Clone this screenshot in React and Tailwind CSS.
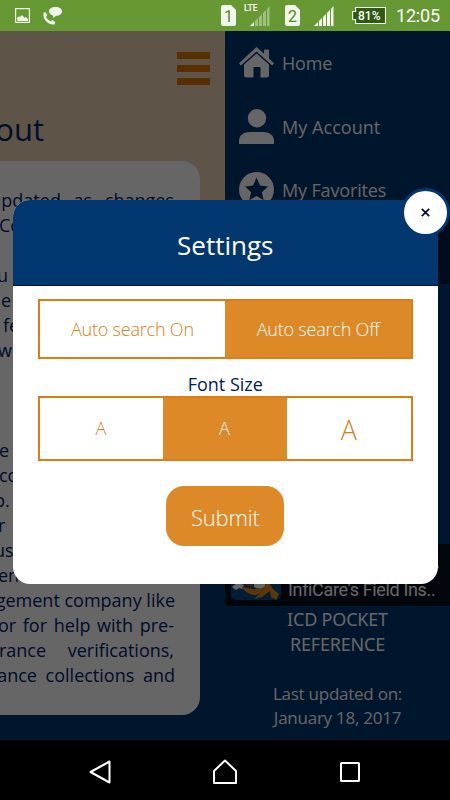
import React, { useState } from 'react';

// visible part of every article line, 25px each; lines are justified so the word gap varies
const articleLines = [
  { text: 'updated as changes', end: true, gap: 'pr-[26px] [word-spacing:8px]' },
  { text: 'Co', gap: '-ml-[1px]' },
  { text: '' },
  { text: 'u', gap: '-ml-[3px]' },
  { text: 'e', gap: 'pl-[1px]' },
  { text: 'fe', gap: 'pl-[3px]' },
  { text: 'wi', gap: '-ml-[2px]' },
  { text: '' },
  { text: '' },
  { text: '' },
  { text: 'e', gap: '-ml-[1px]' },
  { text: 'co', gap: '-ml-[1px]' },
  { text: 'p.', gap: '-ml-[6px]' },
  { text: 'r', gap: '-ml-[2px]' },
  { text: 'us', gap: '-ml-[6px]' },
  { text: 'en', gap: '-ml-[2px]' },
  { text: 'gement company like', end: true, gap: 'pr-[25px]' },
  { text: 'or for help with pre-', end: true, gap: 'pr-[26px] [word-spacing:2px]' },
  { text: 'urance verifications,', end: true, gap: 'pr-[26px] [word-spacing:17px]' },
  { text: 'ance collections and', end: true, gap: 'pr-[25px] [word-spacing:4px]' },
];

const SimCard = ({ n }) => (
  <div className="relative w-[15px] h-[21px]">
    <svg className="absolute inset-0" width="15" height="21" viewBox="0 0 15 21">
      <path d="M2 0h8l5 5v14a2 2 0 0 1-2 2H2a2 2 0 0 1-2-2V2a2 2 0 0 1 2-2z" fill="#f1f6ec" />
    </svg>
    <span className="relative block text-center text-[16px] leading-[23px] text-[#4f8a1c]">{n}</span>
  </div>
);

const Signal = ({ weak }) => (
  <svg width="20" height="20" viewBox="0 0 20 20" fill="#f4f8f0">
    <path d="M0 20L4 16V20z" />
    <path d="M5 15L8 12V20H5z" opacity={weak ? 0.4 : 1} />
    <path d="M9 11L12 8V20H9z" opacity={weak ? 0.4 : 1} />
    <path d="M13 7L16 4V20H13z" opacity={weak ? 0.4 : 1} />
    <path d="M17 3L19.5 0V20H17z" opacity={weak ? 0.4 : 1} />
  </svg>
);

const StatusBar = () => (
  <header className="h-[31px] bg-[#669933] flex items-start text-white font-[Roboto,sans-serif]">
    <svg className="ml-[15px] mt-2" width="15" height="15" viewBox="0 0 15 15">
      <rect x=".6" y=".6" width="13.8" height="13.8" fill="none" stroke="#f1f6ec" strokeWidth="1.2" />
      <path d="M2.3 13V9.5L4 8.3 5 9l2-2 2.5 2.7L11 9l2 2v2z" fill="#f1f6ec" />
    </svg>
    <svg className="ml-[12px] mt-[6px]" width="21" height="20" viewBox="0 0 21 20" fill="#f1f6ec">
      <path d="M13.5 1C17.5 1 20 2.6 20 5.4 20 8 17.5 9.6 14 9.8L11.6 12 11 9.4C8.6 8.8 7 7.5 7 5.5 7 2.7 9.6 1 13.5 1z" />
      <path d="M1.6 6.5L3.7 6.2 5.2 9.3 4 11c1 1.8 2.500 3.200 4.500 4.200L10.400 14l2.800 2-.5 2.400C8 19.600 0 14.500 1.600 6.500z" />
    </svg>
    <div className="ml-[158px] mt-[5px]"><SimCard n="1" /></div>
    <div className="relative ml-[14px] mt-[6px]">
      <span className="absolute -left-[6px] -top-[3px] text-[8.5px] leading-[10px] font-medium">LTE</span>
      <Signal weak />
    </div>
    <div className="ml-[15px] mt-[5px]"><SimCard n="2" /></div>
    <div className="ml-[14px] mt-[6px]"><Signal /></div>
    <div className="relative ml-[18px] mt-[7px] w-[34px] h-[17px]">
      <svg className="absolute inset-0" width="34" height="17" viewBox="0 0 34 17">
        <path d="M3.6 .5H33.5V16.5H3.6V12.5H.6V4.5H3.6z" fill="#2f5a14" stroke="#f4f8f0" strokeWidth="1.1" />
      </svg>
      <span className="relative block pl-[6px] text-[12px] leading-[18px] font-medium">81%</span>
    </div>
    <span className="ml-[10px] text-[18px] leading-[32px] tracking-[-0.2px]">12:05</span>
  </header>
);

const Article = () => (
  <section className="relative w-[225px] h-[709px] shrink-0 overflow-hidden bg-[#00376e]">
    <div className="h-[480px] bg-[#ebd2b4]">
      <div className="h-[130px] flex flex-col">
        <div className="mt-[21px] ml-[177px] w-[33px] flex flex-col gap-[6px]">
          <div className="h-[7px] bg-[#dd7700]"></div>
          <div className="h-[7px] bg-[#dd7700]"></div>
          <div className="h-[7px] bg-[#dd7700]"></div>
        </div>
        <h1 className="mt-[20px] w-[44px] flex justify-end text-[31px] leading-[48px] text-[#00286e]">out</h1>
      </div>
      <div className="w-[200px] h-[554px] pt-[27px] bg-white rounded-r-[18px] overflow-hidden text-[18px] leading-[25px] text-[#00226a]">
        {articleLines.map((line, i) => (
          <div key={i} className={`h-[25px] flex whitespace-nowrap ${line.end ? 'justify-end' : 'justify-start'}`}>
            <span className={line.gap}>{line.text}</span>
          </div>
        ))}
      </div>
    </div>
  </section>
);

const HomeIcon = () => (
  <svg width="35" height="32" viewBox="0 0 35 32" fill="#fff">
    <path d="M17.5 0L25 6.8V3.5q0-1 1-1h3q1 0 1 1v8L35 16.2 33.2 18.5 17.5 4.5 1.8 18.5 0 16.2z" />
    <path d="M17.5 6.5L30 17.5V28q0 2.5-2.5 2.5H21.5V21q0-1-1-1h-5q-1 0-1 1v9.5H7.5Q5 30.5 5 28V17.5z" />
  </svg>
);

const UserIcon = () => (
  <svg width="35" height="35" viewBox="0 0 35 35" fill="#fff">
    <circle cx="18" cy="9.2" r="9.2" />
    <path d="M0 35V32C0 26 5 23 11 23H24C30 23 35 26 35 32V35z" />
  </svg>
);

const StarIcon = () => (
  <svg width="35" height="35" viewBox="0 0 35 35">
    <circle cx="17.5" cy="17.5" r="17.5" fill="#fff" />
    <path d="M17.5 5.5L21 13.6 29 14.4 22.9 20.2 24.7 28.3 17.5 24 10.3 28.3 12.1 20.2 6 14.4 14 13.6z" fill="#00376e" />
  </svg>
);

const menu = [
  { label: 'Home', Icon: HomeIcon, spacing: 'tracking-[-0.2px]' },
  { label: 'My Account', Icon: UserIcon, spacing: 'tracking-[0.05px]' },
  { label: 'My Favorites', Icon: StarIcon, spacing: 'tracking-[-0.15px]' },
];

const Sidebar = () => (
  <aside className="w-[225px] h-[709px] bg-[#00376e] text-white">
    <nav className="h-[182px]">
      {menu.map(({ label, Icon, spacing }) => (
        <div key={label} className="h-[63.5px] pl-[14px] flex items-center gap-[8px] text-[18px]">
          <Icon />
          <span className={`pt-[2px] ${spacing}`}>{label}</span>
        </div>
      ))}
    </nav>
    <div className="h-[71px] bg-[#001f40]"></div>
    <div className="h-[260px]"></div>
    <div className="h-[62px] bg-[#000f20] flex gap-[7px] pl-[6px] pt-[6px] font-[Roboto,sans-serif] text-[18px] leading-[24px]">
      <svg width="50" height="50" viewBox="0 0 50 50">
        <rect width="50" height="50" rx="5" fill="#0b4a88" />
        <path d="M1 37q5-6 12-2l-2 4-3-1-3 2z" fill="#fff" />
        <path d="M10 36Q20 41 32 38Q29 46 22 45Q14 43 10 36z" fill="#e8891a" />
        <path d="M23 30h11v7q-6 3-11 0z" fill="#fff" />
        <path d="M14 34q4 3 8 2v-4h-8z" fill="#d63218" />
        <path d="M36 30l6 9 6 5-3 6-5-3-1-6-8 6-8 2q10-8 13-19z" fill="#e8891a" />
      </svg>
      <div className="whitespace-nowrap">
        <div className="w-[152px] flex justify-end">..</div>
        <div className="tracking-[-0.35px] mt-[4px]">InfiCare's Field Ins..</div>
      </div>
    </div>
    <div className="pt-[1px] text-center text-[18px] leading-[25px] tracking-[-0.2px] font-['Noto_Sans',sans-serif]">
      <p>ICD POCKET</p>
      <p>REFERENCE</p>
    </div>
    <div className="mt-[25px] text-center text-[17px] leading-[23.5px] tracking-[-0.25px]">
      <p>Last updated on:</p>
      <p>January 18, 2017</p>
    </div>
  </aside>
);

const sizes = [
  { id: 'small', className: 'w-[123px] text-[18px]' },
  { id: 'medium', className: 'w-[124px] text-[18px]' },
  { id: 'large', className: 'flex-1 text-[27px] pt-[3px]' },
];

const SettingsModal = () => {
  const [autoSearch, setAutoSearch] = useState(false);
  const [fontSize, setFontSize] = useState('medium');

  return (
    <div className="absolute left-[12.5px] top-[169px] w-[425.5px] h-[384px]">
      <div className="w-full h-full bg-white rounded-[17px] overflow-hidden flex flex-col">
        <div className="h-[86px] shrink-0 bg-[#033770] border-b border-[#00105c] flex items-center justify-center">
          <h2 className="text-white text-[26px] leading-none pt-[4px]">Settings</h2>
        </div>
        <div className="px-[25px] pt-[13px] flex flex-col items-center font-light">
          <div className="w-full h-[60px] flex border-2 border-[#dd7e14] text-[18px] tracking-[-0.2px]">
            <button
              onClick={() => setAutoSearch(true)}
              className={`flex-1 ${autoSearch ? 'bg-[#dd8928] text-white' : 'bg-white text-[#dd7e14]'}`}
            >
              Auto search On
            </button>
            <button
              onClick={() => setAutoSearch(false)}
              className={`flex-1 ${autoSearch ? 'bg-white text-[#dd7e14]' : 'bg-[#dd8928] text-white'}`}
            >
              Auto search Off
            </button>
          </div>
          <p className="mt-[13px] h-[24px] leading-[25px] text-[18px] text-[#00185e] font-normal">Font Size</p>
          <div className="w-full h-[65px] flex border-2 border-[#dd7e14]">
            {sizes.map((s) => (
              <button
                key={s.id}
                onClick={() => setFontSize(s.id)}
                className={`${s.className} ${fontSize === s.id ? 'bg-[#dd8928] text-white' : 'bg-white text-[#dd7e14]'}`}
              >
                A
              </button>
            ))}
          </div>
          <button className="mt-[25px] w-[118px] h-[60px] pt-[2px] rounded-[18px] bg-[#dd8928] text-white text-[22px] tracking-[-0.2px]">Submit</button>
        </div>
      </div>
      <button className="absolute -right-[12px] -top-[12px] w-[49px] h-[49px] rounded-full bg-white border-[3px] border-[#033770] flex items-center justify-center">
        <svg width="9" height="9" viewBox="0 0 9 9">
          <path d="M.8 .8L8.2 8.2M8.2 .8L.8 8.2" stroke="#000840" strokeWidth="1.7" />
        </svg>
      </button>
    </div>
  );
};

const NavBar = () => (
  <footer className="h-[60px] bg-black flex items-center text-white pt-1">
    <svg className="ml-[88px]" width="24" height="26" viewBox="0 0 24 26" fill="none" stroke="#fff" strokeWidth="2">
      <path d="M2.5 13L21.5 2.5V23.5z" strokeLinejoin="round" />
    </svg>
    <svg className="ml-[100px]" width="26" height="26" viewBox="0 0 26 26" fill="none" stroke="#fff" strokeWidth="2">
      <path d="M2 12L13 1.5 24 12V24H2z" strokeLinejoin="round" />
    </svg>
    <svg className="ml-[101px]" width="22" height="22" viewBox="0 0 22 22" fill="none" stroke="#fff" strokeWidth="2">
      <rect x="2" y="2" width="18" height="18" rx=".5" />
    </svg>
  </footer>
);

export default function App() {
  return (
    <div className="w-[450px] h-[800px] overflow-hidden flex flex-col bg-black font-['Open_Sans',sans-serif]">
      <StatusBar />
      <main className="relative h-[709px] flex">
        <Article />
        <Sidebar />
        <div className="absolute inset-0 bg-black/60"></div>
        <SettingsModal />
      </main>
      <NavBar />
    </div>
  );
}
